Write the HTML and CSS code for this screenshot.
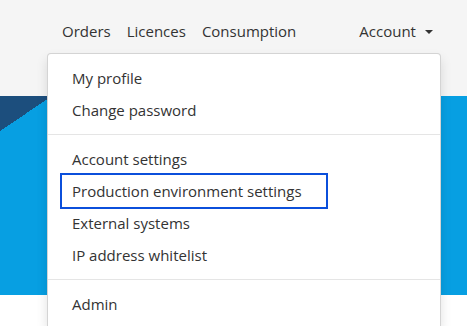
FILE: index.html
```html
<!DOCTYPE html>
<html>
<head>
<meta charset="utf-8">
<link rel="stylesheet" href="styles.css">
</head>
<body>
<header class="navbar">
  <nav class="nav-left">
    <a class="nav-link" href="#">Orders</a>
    <a class="nav-link" href="#">Licences</a>
    <a class="nav-link" href="#">Consumption</a>
  </nav>
  <a class="nav-link account" href="#">Account <span class="caret"></span></a>
</header>
<section class="hero"></section>
<main class="content"></main>
<ul class="dropdown">
  <li><a class="item" href="#">My profile</a></li>
  <li><a class="item" href="#">Change password</a></li>
  <li class="divider"></li>
  <li><a class="item" href="#">Account settings</a></li>
  <li><a class="item focused" href="#">Production environment settings</a></li>
  <li><a class="item" href="#">External systems</a></li>
  <li><a class="item" href="#">IP address whitelist</a></li>
  <li class="divider"></li>
  <li><a class="item" href="#">Admin</a></li>
</ul>
</body>
</html>
```
FILE: styles.css
```css
html, body {
  margin: 0;
  padding: 0;
}
body {
  font-family: "Segoe UI", "Open Sans", "Noto Sans", sans-serif;
  font-size: 15px;
  color: #333;
  background: #fff;
  position: relative;
  overflow: hidden;
  height: 326px;
}
a {
  color: #333;
  text-decoration: none;
}
.navbar {
  height: 96px;
  background: #f5f5f5;
  display: flex;
  align-items: flex-start;
  padding: 19px 0 0 62px;
  box-sizing: border-box;
}
.nav-left {
  display: flex;
  gap: 16px;
}
.nav-link {
  line-height: 24px;
}
.account {
  margin-left: 63px;
  display: flex;
  align-items: center;
  gap: 9px;
}
.caret {
  width: 0;
  height: 0;
  border-left: 4px solid transparent;
  border-right: 4px solid transparent;
  border-top: 4px solid #333;
  margin-top: 1px;
}
.hero {
  height: 199px;
  background:
    linear-gradient(to bottom right, #1c4e7d 50%, transparent 50%) 0 0 / 52px 35px no-repeat,
    #079fe2;
}
.dropdown {
  position: absolute;
  left: 47px;
  top: 53px;
  width: 394px;
  height: 273px;
  box-sizing: border-box;
  margin: 0;
  padding: 8px 0 0;
  list-style: none;
  background: #fff;
  border: 1px solid rgba(0,0,0,.17);
  border-bottom: 0;
  border-radius: 4px 4px 0 0;
  box-shadow: 0 6px 12px rgba(0,0,0,.12);
}
.dropdown li {
  display: flex;
}
.item {
  display: block;
  line-height: 32px;
  padding: 0 24px;
  white-space: nowrap;
}
.item.focused {
  margin-left: 14px;
  padding: 0 24px 0 10px;
  outline: 2px solid #0b4fdb;
  outline-offset: 0;
}
.divider {
  height: 1px;
  margin: 8px 0;
  background: #e5e5e5;
}
```
